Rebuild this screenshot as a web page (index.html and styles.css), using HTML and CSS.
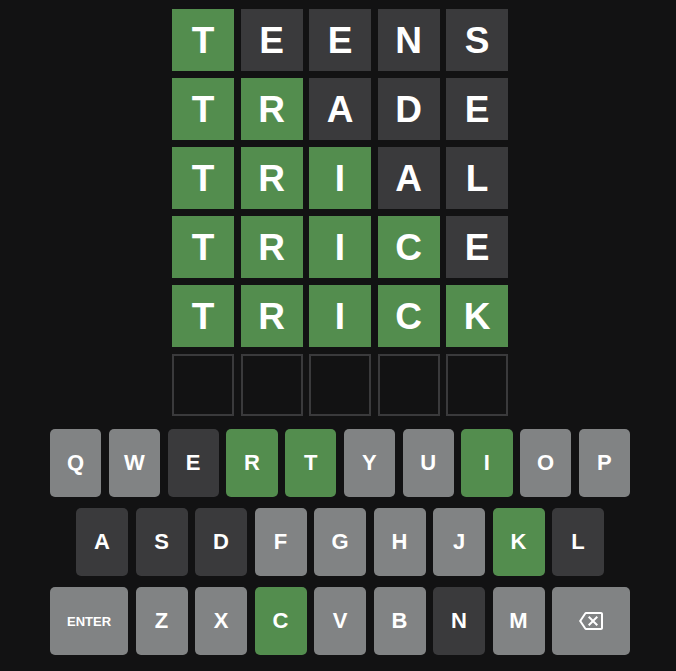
FILE: index.html
```html
<!DOCTYPE html>
<html>
<head>
<meta charset="utf-8">
<link rel="stylesheet" href="styles.css">
</head>
<body>
<div class="game">
  <div class="board">
    <div class="tile correct">T</div><div class="tile absent">E</div><div class="tile absent">E</div><div class="tile absent">N</div><div class="tile absent">S</div>
    <div class="tile correct">T</div><div class="tile correct">R</div><div class="tile absent">A</div><div class="tile absent">D</div><div class="tile absent">E</div>
    <div class="tile correct">T</div><div class="tile correct">R</div><div class="tile correct">I</div><div class="tile absent">A</div><div class="tile absent">L</div>
    <div class="tile correct">T</div><div class="tile correct">R</div><div class="tile correct">I</div><div class="tile correct">C</div><div class="tile absent">E</div>
    <div class="tile correct">T</div><div class="tile correct">R</div><div class="tile correct">I</div><div class="tile correct">C</div><div class="tile correct">K</div>
    <div class="tile empty"></div><div class="tile empty"></div><div class="tile empty"></div><div class="tile empty"></div><div class="tile empty"></div>
  </div>
  <div class="keyboard">
    <div class="krow">
      <button class="key">Q</button><button class="key">W</button><button class="key absent">E</button><button class="key correct">R</button><button class="key correct">T</button><button class="key">Y</button><button class="key">U</button><button class="key correct">I</button><button class="key">O</button><button class="key">P</button>
    </div>
    <div class="krow">
      <div class="half"></div>
      <button class="key absent">A</button><button class="key absent">S</button><button class="key absent">D</button><button class="key">F</button><button class="key">G</button><button class="key">H</button><button class="key">J</button><button class="key correct">K</button><button class="key absent">L</button>
      <div class="half"></div>
    </div>
    <div class="krow">
      <button class="key wide small">ENTER</button><button class="key">Z</button><button class="key">X</button><button class="key correct">C</button><button class="key">V</button><button class="key">B</button><button class="key absent">N</button><button class="key">M</button>
      <button class="key wide"><svg class="bksp" viewBox="0 0 24 24" width="24" height="24"><path fill="#ffffff" d="M22 3H7c-.69 0-1.23.35-1.59.88L0 12l5.41 8.11c.36.53.9.89 1.59.89h15c1.1 0 2-.9 2-2V5c0-1.1-.9-2-2-2zm0 16H7.07L2.4 12l4.66-7H22v14zm-11.59-2L14 13.41 17.59 17 19 15.59 15.41 12 19 8.41 17.59 7 14 10.59 10.41 7 9 8.41 12.59 12 9 15.59z"/></svg></button>
    </div>
  </div>
</div>
</body>
</html>
```

FILE: styles.css
```css
html, body {
  margin: 0;
  padding: 0;
  background: #121213;
  width: 676px;
  height: 671px;
  overflow: hidden;
}
.game {
  width: 580px;
  margin-left: 50px;
  padding-top: 9px;
  font-family: "Liberation Sans", Arial, sans-serif;
}
.board {
  display: grid;
  grid-template-columns: repeat(5, 62px);
  grid-auto-rows: 62px;
  column-gap: 6.5px;
  row-gap: 7px;
  width: 336px;
  margin: 0 auto;
}
.tile {
  box-sizing: border-box;
  display: flex;
  align-items: center;
  justify-content: center;
  color: #ffffff;
  font-weight: bold;
  font-size: 37px;
  line-height: 1;
}
.tile.correct { background: #538d4e; }
.tile.absent { background: #3a3a3c; }
.tile.empty { border: 2px solid #3a3a3c; }
.keyboard {
  margin-top: 13px;
}
.krow {
  display: flex;
  gap: 7.5px;
  margin-bottom: 11px;
}
.krow .half {
  flex: 0.5;
  margin-right: -7.5px;
}
.krow .half:last-child {
  margin-right: 0;
  margin-left: -7.5px;
}
.key {
  flex: 1;
  height: 68px;
  border: 0;
  padding: 0;
  margin: 0;
  border-radius: 5px;
  background: #818384;
  color: #ffffff;
  font-family: "Liberation Sans", Arial, sans-serif;
  font-weight: bold;
  font-size: 22px;
  display: flex;
  align-items: center;
  justify-content: center;
}
.key.correct { background: #538d4e; }
.key.absent { background: #3a3a3c; }
.key.wide { flex: 1.5; }
.key.small { font-size: 13px; }
.bksp { display: block; }
```
